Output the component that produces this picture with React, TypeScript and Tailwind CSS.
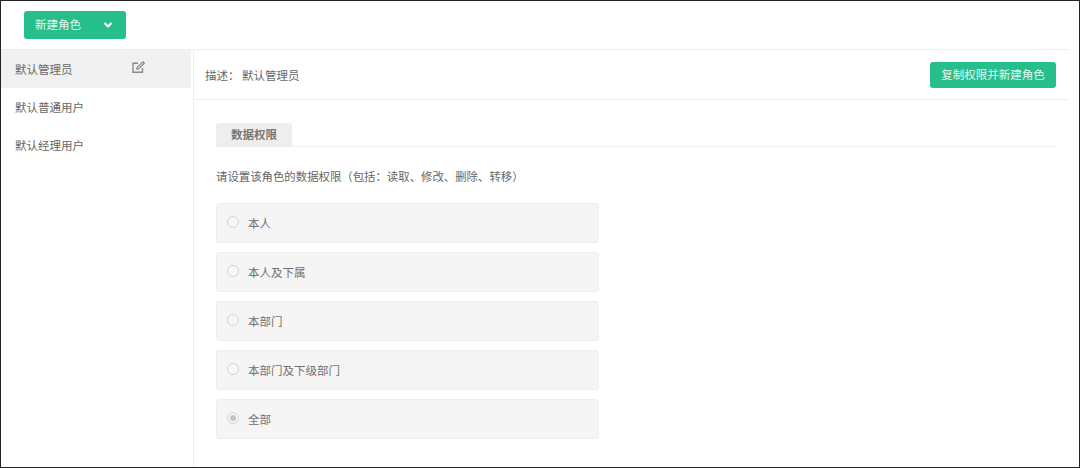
import React from 'react';
import { ChevronDown } from 'lucide-react';

const roles = ['默认管理员', '默认普通用户', '默认经理用户'];
const scopes = ['本人', '本人及下属', '本部门', '本部门及下级部门', '全部'];

export default function App() {
  return (
    <div className="h-[468px] w-[1080px] overflow-hidden bg-white border border-[#222222] text-[11.5px] text-[#666666] font-['Noto_Sans_CJK_SC','Noto_Sans',sans-serif]">
      {/* top bar */}
      <div className="mr-[11px] h-[49px] border-b border-[#eeeeee] pl-[23px] pt-[10px]">
        <button className="flex h-[28px] w-[102px] items-center justify-between rounded-[3px] bg-[#26bf8c] pl-[11px] pr-[12px] text-[#e6f7f1]">
          新建角色
          <ChevronDown size={12} strokeWidth={4} className="text-white" />
        </button>
      </div>

      <div className="flex h-[417px]">
        {/* role list */}
        <aside className="w-[193px] shrink-0 border-r border-[#eeeeee] pr-[2px]">
          {roles.map((r, i) => (
            <div key={r} className={`flex h-[38px] items-center justify-between pl-[14px] pr-[46px] ${i === 0 ? 'bg-[#f1f1f1]' : ''}`}>
              <span className="mt-[2px]">{r}</span>
              {i === 0 && (
                <svg width="13" height="13" viewBox="0 0 13 13" fill="none" stroke="#8a8a8a" strokeWidth="1.4" className="mb-[3px]">
                  <path d="M10.5 7v4.3H1V2.2h5" />
                  <path d="M4.8 8.2l.4-2L11 .8l1.4 1.5-5.6 5.5z" strokeWidth="1.2" />
                </svg>
              )}
            </div>
          ))}
        </aside>

        {/* detail */}
        <main className="mr-[11px] flex-1">
          <div className="flex h-[50px] items-center justify-between border-b border-[#eeeeee] pl-[11px] pr-[12px]">
            <span className="mt-[3px]">描述：&nbsp;默认管理员</span>
            <button className="mt-[1px] h-[26px] w-[126px] rounded-[3px] bg-[#26bf8c] text-center text-[#e6f7f1]">复制权限并新建角色</button>
          </div>

          <div className="pl-[22px] pr-[12px] pt-[23px]">
            <div className="border-b border-[#eeeeee]">
              <div className="flex h-[23px] w-[76px] items-center justify-center rounded-t-[3px] bg-[#eeeeee] font-bold text-[#777777]">数据权限</div>
            </div>
            <p className="mt-[21px] text-[11.4px] leading-[16px]">请设置该角色的数据权限（包括：读取、修改、删除、转移）</p>
            <div className="mt-[19px] flex w-[383px] flex-col gap-[9px]">
              {scopes.map((s, i) => (
                <label key={s} className="flex h-[40px] items-center gap-[9px] rounded-[3px] border border-[#eeeeee] bg-[#f5f5f5] pl-[10px]">
                  <span className="mb-[2px] flex h-[12px] w-[12px] items-center justify-center rounded-full border border-[#d4d4d4] bg-[#f7f7f7]">
                    {i === 4 && <span className="h-[6px] w-[6px] rounded-full bg-[#c4c4c4]" />}
                  </span>
                  <span className="mt-[1px] text-[#707070]">{s}</span>
                </label>
              ))}
            </div>
          </div>
        </main>
      </div>
    </div>
  );
}
